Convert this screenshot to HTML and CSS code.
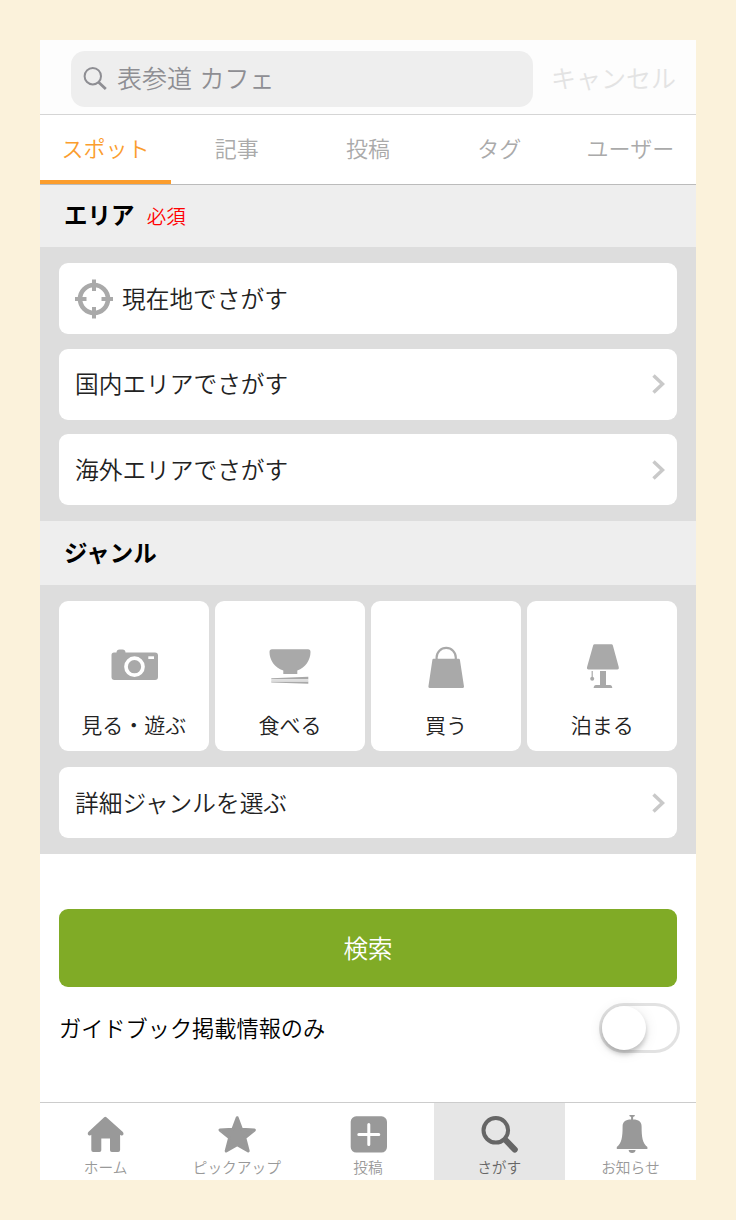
FILE: index.html
```html
<!DOCTYPE html>
<html lang="ja">
<head>
    <meta charset="UTF-8">
    <meta name="viewport" content="width=device-width, initial-scale=1.0">
    <title>さがす</title>
    <link rel="stylesheet" href="styles.css">
</head>
<body>
    <div class="screen">
        <header class="search-header">
            <div class="search-box">
                <svg class="search-icon" width="24" height="24" viewBox="0 0 24 24">
                    <circle cx="9.8" cy="9.2" r="8.2" fill="none" stroke="#8e8e93" stroke-width="2"/>
                    <path d="M15.6 15.2L22.8 22" stroke="#8e8e93" stroke-width="2.8"/>
                </svg>
                <span>表参道 カフェ</span>
            </div>
            <span class="cancel">キャンセル</span>
        </header>

        <nav class="tabs">
            <a class="tab active">スポット</a>
            <a class="tab">記事</a>
            <a class="tab">投稿</a>
            <a class="tab">タグ</a>
            <a class="tab">ユーザー</a>
        </nav>

        <h2 class="section-title area-title">エリア <span class="required">必須</span></h2>
        <div class="panel area-panel">
            <div class="row">
                <svg class="target-icon" width="38" height="40" viewBox="0 0 38 40">
                    <circle cx="19" cy="20" r="14" fill="none" stroke="#a9a9a9" stroke-width="4.6"/>
                    <path d="M19 .5V12M19 28v11.500M0 20h11.500M26.500 20H38" stroke="#a9a9a9" stroke-width="4"/>
                </svg>
                <span>現在地でさがす</span>
            </div>
            <div class="row">
                <span>国内エリアでさがす</span>
                <svg class="chevron" width="13" height="20" viewBox="0 0 13 20"><path d="M1.5 1.500L10.500 10L1.5 18.500" fill="none" stroke="#c9c9c9" stroke-width="3.5"/></svg>
            </div>
            <div class="row">
                <span>海外エリアでさがす</span>
                <svg class="chevron" width="13" height="20" viewBox="0 0 13 20"><path d="M1.5 1.500L10.500 10L1.5 18.500" fill="none" stroke="#c9c9c9" stroke-width="3.5"/></svg>
            </div>
        </div>

        <h2 class="section-title genre-title">ジャンル</h2>
        <div class="panel genre-panel">
            <div class="tiles">
                <div class="tile">
                    <svg width="60" height="60" viewBox="0 0 60 60" fill="#a9a9a9">
                        <path d="M10 17.500h2.500c0-2 1.200-3 3-3h3c1.800 0 3 1 3 3H51a3 3 0 0 1 3 3V42a3 3 0 0 1-3 3H10.500a3 3 0 0 1-3-3V20a2.500 2.500 0 0 1 2.500-2.500z"/>
                        <circle cx="30.500" cy="31.700" r="8.500" fill="none" stroke="#fff" stroke-width="3.700"/>
                        <rect x="44.300" y="21.300" width="5.700" height="2.700" fill="#fff"/>
                    </svg>
                    <span>見る・遊ぶ</span>
                </div>
                <div class="tile">
                    <svg width="60" height="60" viewBox="0 0 60 60" fill="#a9a9a9">
                        <path d="M12 14.300h36c1.600 0 2.500 1 2.500 2.700 0 8-5 15.500-13.200 18.500v3.500H23.300v-3.500C14.500 32.500 9.500 25 9.500 17c0-1.700.9-2.700 2.500-2.700z"/>
                        <path d="M11.300 43.300L48.300 41.800v2.400L11.300 44.300zM11.300 46.400l37 .2v2.200L11.300 47.500z"/>
                        <path d="M11.300 44.200h37v2.300l-37-.1z" fill="#dedede"/>
                    </svg>
                    <span>食べる</span>
                </div>
                <div class="tile">
                    <svg width="60" height="60" viewBox="0 0 60 60" fill="#a9a9a9">
                        <path d="M20.600 25v-2.500a9.600 9.600 0 0 1 19.200 0V25" fill="none" stroke="#a9a9a9" stroke-width="2.200"/>
                        <path d="M17.500 23.700h25.200q1 0 1.200 1L48 51.600q.2 1.400-1.200 1.400H13.600q-1.400 0-1.200-1.400l4-26.900q.1-1 1.100-1z"/>
                    </svg>
                    <span>買う</span>
                </div>
                <div class="tile">
                    <svg width="60" height="60" viewBox="0 0 60 60" fill="#a9a9a9">
                        <path d="M22.500 9.300h17q1 0 1.300 1l6 22q.5 2.200-1.500 2.200H16.500q-2 0-1.500-2.200l6.200-22q.3-1 1.300-1z"/>
                        <path d="M28 36h6v14h4q2 0 2.300 3H21.600q.3-3 2.400-3h4z"/>
                        <path d="M19.600 36h1.200v6h-1.200z"/>
                        <circle cx="20.200" cy="43.700" r="2"/>
                    </svg>
                    <span>泊まる</span>
                </div>
            </div>
            <div class="row">
                <span>詳細ジャンルを選ぶ</span>
                <svg class="chevron" width="13" height="20" viewBox="0 0 13 20"><path d="M1.5 1.500L10.500 10L1.5 18.500" fill="none" stroke="#c9c9c9" stroke-width="3.5"/></svg>
            </div>
        </div>

        <div class="actions">
            <button class="submit">検索</button>
            <div class="option">
                <span>ガイドブック掲載情報のみ</span>
                <div class="switch"><div class="knob"></div></div>
            </div>
        </div>

        <nav class="tabbar">
            <a class="tabbar-item">
                <svg width="40" height="40" viewBox="0 0 40 40" fill="#999">
                    <path d="M18.200 3.300q1.100-1 2.200 0L36.600 17.800q1.300 1.200.8 2.700-1 1.600-2.600.7l-.7-.4V36q0 2-2 2h-6.300q-1.800 0-1.800-1.800V24.500H15.300v11.700q0 1.800-1.800 1.800H7.300q-2 0-2-2V20.800l-.7.4q-1.600 1-2.700-.7-.6-1.500.7-2.700z"/>
                </svg>
                <span>ホーム</span>
            </a>
            <a class="tabbar-item">
                <svg width="40" height="40" viewBox="0 0 40 40" fill="#999" stroke="#999" stroke-width="3" stroke-linejoin="round">
                    <path d="M20.200 3.700L24.500 15.200L37.400 16L27.800 23.900L31.200 37L20.200 30.800L9.200 37L12.600 23.900L3 16L15.900 15.200z"/>
                </svg>
                <span>ピックアップ</span>
            </a>
            <a class="tabbar-item">
                <svg width="40" height="40" viewBox="0 0 40 40">
                    <rect x="2.700" y="2.300" width="36.300" height="36.300" rx="5.500" fill="#999"/>
                    <path d="M20.800 10.500v20M10.800 20.500h20" stroke="#fff" stroke-width="3" stroke-linecap="round"/>
                </svg>
                <span>投稿</span>
            </a>
            <a class="tabbar-item current">
                <svg width="40" height="40" viewBox="0 0 40 40" fill="none" stroke="#666">
                    <circle cx="16.800" cy="16.300" r="12.300" stroke-width="4"/>
                    <path d="M26.500 26L35.800 35.600" stroke-width="6" stroke-linecap="round"/>
                </svg>
                <span>さがす</span>
            </a>
            <a class="tabbar-item">
                <svg width="40" height="40" viewBox="0 0 40 40" fill="#999">
                    <path d="M19.300 1h5.600q.2 1.300-1.800 2v2.400c5.700 0 8.500 2.300 8.500 7 0 11 1 16.500 5.800 20.600V35H6.800v-2c4.800-4.100 5.800-9.600 5.800-20.600 0-4.700 2.800-7 8.500-7V3q-2-.7-1.800-2z"/>
                    <path d="M18.600 36h7q-.3 3-3.500 3t-3.500-3z"/>
                </svg>
                <span>お知らせ</span>
            </a>
        </nav>
    </div>
</body>
</html>
```

FILE: styles.css
```css
* {
    box-sizing: border-box;
}
body {
    margin: 0;
    padding: 40px;
    background: #fbf2db;
    font-family: "Noto Sans CJK JP", sans-serif;
    font-weight: 350;
    color: #222;
}
svg {
    display: block;
    flex-shrink: 0;
}
.screen {
    display: flex;
    flex-direction: column;
    width: 656px;
    height: 1140px;
    background: #fff;
}

/* search bar */
.search-header {
    display: flex;
    align-items: center;
    height: 75px;
    padding: 0 20px 0 31px;
    background: #fdfdfd;
    border-bottom: 1px solid #d5d5d5;
}
.search-box {
    display: flex;
    align-items: center;
    width: 462px;
    height: 56px;
    margin-top: 4px;
    padding-left: 12px;
    border-radius: 14px;
    background: #eee;
    color: #8e8e93;
    font-size: 25px;
    line-height: 36px;
}
.search-box span {
    padding-bottom: 4px;
    word-spacing: 2px;
}
.search-icon {
    margin-right: 10px;
}
.cancel {
    margin-left: 18px;
    padding-bottom: 1px;
    color: #e3e3e3;
    font-size: 25px;
    line-height: 36px;
}

/* category tabs */
.tabs {
    display: grid;
    grid-template-columns: repeat(5, 1fr);
    height: 70px;
    border-bottom: 1px solid #bbb;
}
.tab {
    padding-top: 14px;
    font-size: 22px;
    line-height: 36px;
    text-align: center;
    color: #aaa;
}
.tab.active {
    color: #fb9d2d;
    border-bottom: 4px solid #fb9d2d;
}

.section-title {
    margin: 0;
    padding-left: 24px;
    background: #eee;
    color: #000;
    font-size: 23.5px;
    font-weight: 700;
}
.area-title {
    height: 62px;
    line-height: 58px;
}
.genre-title {
    height: 64px;
    line-height: 62px;
}
.required {
    margin-left: 7px;
    color: #f00;
    font-size: 19.5px;
    font-weight: 350;
}
.panel {
    padding: 16px 19px 0;
    background: #ddd;
}
.area-panel {
    display: grid;
    grid-auto-rows: 71px;
    gap: 14.5px;
    height: 274px;
}
.genre-panel {
    height: 269px;
}
.row {
    display: flex;
    align-items: center;
    height: 71px;
    padding: 0 12px 0 16px;
    border-radius: 9px;
    background: #fff;
    font-size: 23.7px;
    line-height: 36px;
}
.row span {
    padding-bottom: 2px;
}
.target-icon {
    margin-right: 9px;
}
.chevron {
    margin-left: auto;
}
.tiles {
    display: grid;
    grid-template-columns: repeat(4, 1fr);
    gap: 6.5px;
    margin-bottom: 16px;
}
.tile {
    display: flex;
    flex-direction: column;
    align-items: center;
    height: 150px;
    padding-top: 34px;
    border-radius: 9px;
    background: #fff;
    font-size: 21px;
    line-height: 30px;
}
.tile span {
    margin-top: 14px;
}

.actions {
    flex: 1;
    padding: 55px 16px 0 19px;
}
.submit {
    display: block;
    width: 618px;
    height: 78px;
    padding: 0 0 2px;
    border: none;
    border-radius: 9px;
    background: #80ab26;
    color: #fff;
    font: inherit;
    font-size: 24.5px;
}
.option {
    display: flex;
    align-items: center;
    justify-content: space-between;
    margin-top: 16px;
    font-size: 22.2px;
    line-height: 36px;
    color: #000;
}
.option span {
    padding-bottom: 2px;
}
.switch {
    width: 81px;
    height: 50px;
    border: 3px solid #e2e2e2;
    border-radius: 25px;
}
.knob {
    width: 44px;
    height: 44px;
    border-radius: 50%;
    background: #fff;
    box-shadow: 0 4px 5px rgba(0,0,0,0.2), 0 2px 14px rgba(0,0,0,0.1);
}

/* bottom navigation */
.tabbar {
    display: grid;
    grid-template-columns: repeat(5, 1fr);
    height: 78px;
    border-top: 1px solid #ccc;
}
.tabbar-item {
    display: flex;
    flex-direction: column;
    align-items: center;
    padding-top: 11px;
    font-size: 14.7px;
    line-height: 20px;
    color: #999;
}
.tabbar-item span {
    margin-top: 3px;
}
.tabbar-item.current {
    background: #e6e6e6;
    color: #666;
}
```
